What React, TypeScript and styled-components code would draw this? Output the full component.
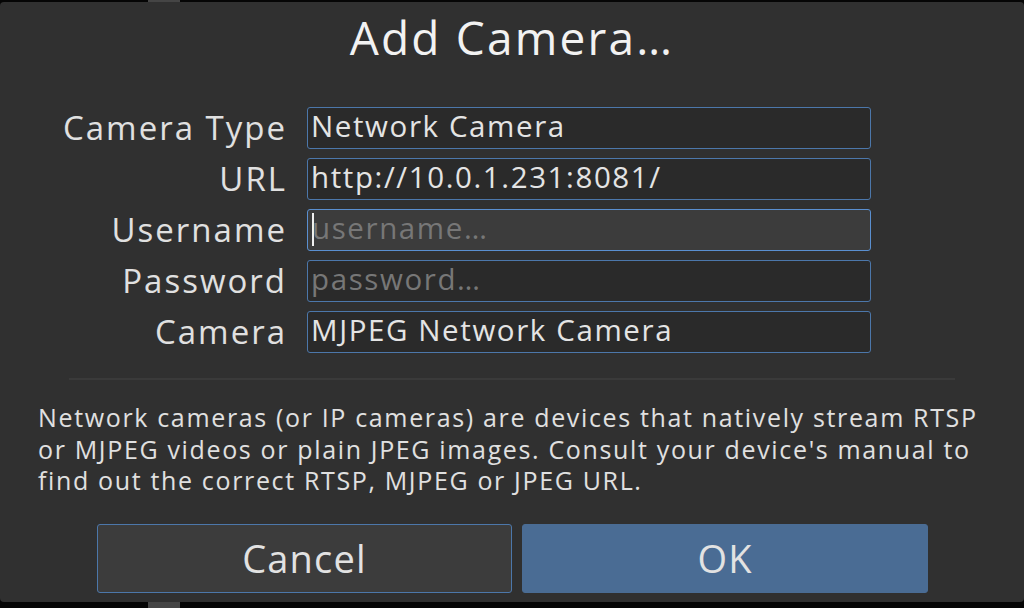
import React from 'react'
import styled, { createGlobalStyle } from 'styled-components'

const GlobalStyle = createGlobalStyle`
  html, body {
    margin: 0;
    padding: 0;
    background: #050505;
    font-family: 'Open Sans', 'DejaVu Sans', sans-serif;
  }
`

const Screen = styled.div`
  position: relative;
  width: 1024px;
  height: 608px;
  overflow: hidden;
  background: #050505;
`

// a bit of the window behind the dialog, peeking out above and below
const Backdrop = styled.div`
  position: absolute;
  left: 148px;
  top: 0;
  width: 32px;
  height: 608px;
  background: #454545;
`

const Dialog = styled.div`
  position: relative;
  margin-top: 2px;
  height: 600px;
  background: #303030;
  border-radius: 4px;
  display: flex;
  flex-direction: column;
  color: #e2e2e2;
`

const Title = styled.h1`
  margin: 0;
  padding-top: 12px;
  text-align: center;
  font-size: 46px;
  line-height: 46px;
  font-weight: 400;
  letter-spacing: 2.2px;
  color: #f2f2f2;
`

const Form = styled.div`
  margin-top: 47px;
  display: grid;
  grid-template-columns: 285px 564px;
  column-gap: 22px;
  row-gap: 9px;
`

const Label = styled.label`
  justify-self: end;
  align-self: start;
  margin: 3px -2px 0 0;
  font-size: 33px;
  line-height: 36px;
  letter-spacing: 2px;
  color: #e0e0e0;
`

const Field = styled.div<{ $focused?: boolean }>`
  height: 42px;
  box-sizing: border-box;
  border: 1.5px solid ${p => (p.$focused ? '#5a8fd0' : '#4c77aa')};
  border-radius: 3px;
  background: ${p => (p.$focused ? '#3c3c3c' : '#2a2a2a')};
  display: flex;
  align-items: flex-start;
  padding: 3px 0 0 3px;
  font-size: 29.5px;
  line-height: 30px;
  letter-spacing: 1.6px;
  color: #e4e4e4;
  white-space: nowrap;
`

const Placeholder = styled.span`
  color: #777;
`

const Caret = styled.span`
  display: inline-block;
  width: 2px;
  height: 33px;
  margin: 0 -2px 0 1px;
  background: #f0f0f0;
`

const Separator = styled.hr`
  margin: 25px 69px 0;
  border: none;
  height: 2px;
  background: #3a3a3a;
`

const Description = styled.p`
  margin: 22px 0 0 38px;
  font-size: 25px;
  line-height: 31.5px;
  letter-spacing: 1.65px;
  color: #e0e0e0;
  white-space: nowrap;
`

const Buttons = styled.div`
  margin-top: 27px;
  padding-left: 97px;
  display: flex;
  gap: 10px;
`

const Button = styled.button<{ $primary?: boolean }>`
  width: ${p => (p.$primary ? '406px' : '415px')};
  height: 69px;
  box-sizing: border-box;
  border-radius: 3px;
  border: 1.5px solid ${p => (p.$primary ? '#4a6c94' : '#4c77aa')};
  background: ${p => (p.$primary ? '#4a6c94' : '#3c3c3c')};
  color: #e2e2e2;
  font-family: inherit;
  font-size: 38px;
  letter-spacing: 1.2px;
  padding: 0;
`

const fields = [
  { label: 'Camera Type', value: 'Network Camera' },
  { label: 'URL', value: 'http://10.0.1.231:8081/' },
  { label: 'Username', placeholder: 'username…', focused: true },
  { label: 'Password', placeholder: 'password…' },
  { label: 'Camera', value: 'MJPEG Network Camera' },
]

const App = () => {
  return (
    <Screen>
      <GlobalStyle />
      <Backdrop />
      <Dialog>
        <Title>Add Camera…</Title>
        <Form>
          {fields.map(f => (
            <React.Fragment key={f.label}>
              <Label>{f.label}</Label>
              <Field $focused={f.focused}>
                {f.focused && <Caret />}
                {f.value ?? <Placeholder>{f.placeholder}</Placeholder>}
              </Field>
            </React.Fragment>
          ))}
        </Form>
        <Separator />
        <Description>
          Network cameras (or IP cameras) are devices that natively stream RTSP
          <br />
          or MJPEG videos or plain JPEG images. Consult your device's manual to
          <br />
          find out the correct RTSP, MJPEG or JPEG URL.
        </Description>
        <Buttons>
          <Button>Cancel</Button>
          <Button $primary>OK</Button>
        </Buttons>
      </Dialog>
    </Screen>
  )
}

export default App
